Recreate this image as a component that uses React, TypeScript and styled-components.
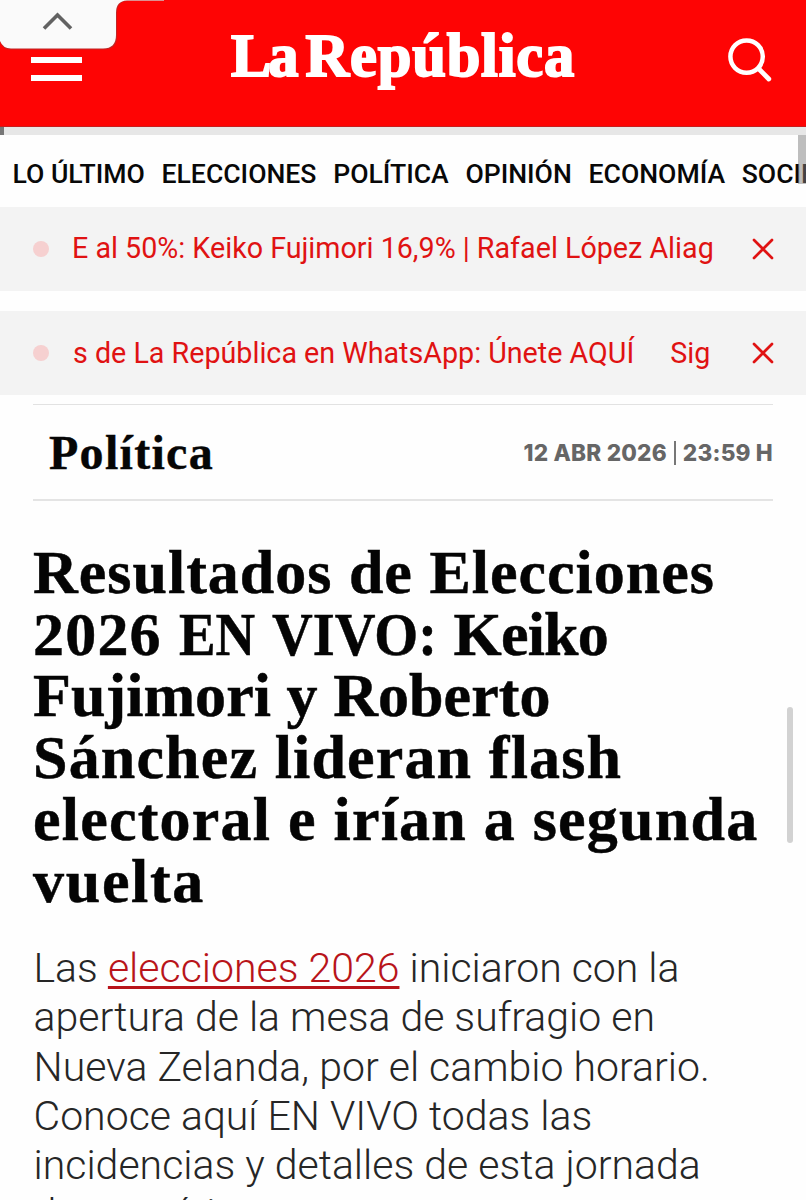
import React from "react";
import styled, { createGlobalStyle } from "styled-components";

const GlobalStyle = createGlobalStyle`
  * { box-sizing: border-box; }
  html, body { margin: 0; padding: 0; background: #fff; }
  body { overflow: hidden; }
`;

const sans = `Roboto, "Liberation Sans", sans-serif`;
const serif = `"Liberation Serif", serif`;

const Page = styled.div`
  position: relative;
  width: 806px;
  height: 1200px;
  overflow: hidden;
  background: #fefefe;
  font-family: ${sans};
`;

const Header = styled.header`
  display: flex;
  align-items: flex-start;
  justify-content: space-between;
  height: 127px;
  padding: 0 33px 0 31px;
  background: #fe0404;
  border-bottom: 1px solid #c81e1e;
`;

const MenuButton = styled.div`
  display: flex;
  flex-direction: column;
  gap: 12px;
  width: 51px;
  margin-top: 57px;
`;

const MenuBar = styled.span`
  height: 6px;
  background: #fff;
`;

const Logo = styled.div`
  display: flex;
  gap: 10px;
  margin: 22px 0 0 -3px;
  font: bold 60.5px/68px ${serif};
  color: #fff;
  white-space: nowrap;
  -webkit-text-stroke: 2px #fff;
`;

const LogoWord = styled.span<{ $spacing: number }>`
  letter-spacing: ${(p) => p.$spacing}px;
`;

const SearchIcon = styled.svg`
  width: 46px;
  height: 46px;
  margin-top: 37px;
`;

const PullTab = styled.div`
  position: absolute;
  top: 0;
  left: 0;
  width: 165px;
  height: 54px;
`;

const Progress = styled.div`
  height: 8px;
  background: #e7e7e7;
`;

const ProgressValue = styled.div`
  width: 4px;
  height: 8px;
  background: #777;
`;

const Nav = styled.nav`
  display: flex;
  align-items: center;
  height: 72px;
  padding: 5px 0 0 12.5px;
  gap: 16.7px;
  overflow: hidden;
`;

const NavItem = styled.span`
  flex: none;
  font-size: 26.6px;
  line-height: 30px;
  font-weight: 500;
  color: #080808;
`;

const Ticker = styled.div`
  display: flex;
  align-items: center;
  height: 84px;
  padding: 0 32px 0 33px;
  margin-bottom: 20px;
  background: #f3f3f3;
`;

const Dot = styled.span`
  flex: none;
  width: 16px;
  height: 16px;
  border-radius: 50%;
  background: #f6d0d0;
`;

const TickerText = styled.div<{ $shift?: number; $lift?: number }>`
  display: flex;
  gap: 36px;
  width: 643px;
  margin-left: 23px;
  padding-left: ${(p) => p.$shift ?? 0}px;
  padding-bottom: ${(p) => p.$lift ?? 0}px;
  overflow: hidden;
  white-space: nowrap;
  font-size: 28.68px;
  line-height: 40px;
  color: #e01212;
`;

const CloseIcon = styled.svg`
  flex: none;
  width: 22px;
  height: 22px;
  margin-left: auto;
`;

const SectionBar = styled.div`
  display: flex;
  align-items: center;
  justify-content: space-between;
  height: 97px;
  margin: -11px 33px 0;
  padding-left: 16px;
  border-top: 1.5px solid #e2e2e2;
  border-bottom: 2px solid #e4e4e4;
`;

const Section = styled.div`
  padding-top: 2px;
  font: bold 48px/56px ${serif};
  letter-spacing: 1.3px;
  color: #060606;
  -webkit-text-stroke: 0.4px #060606;
`;

const DateStamp = styled.div`
  display: flex;
  align-items: center;
  gap: 7px;
  padding-top: 1px;
  font: 800 22.6px/28px Inter, sans-serif;
  letter-spacing: 0.2px;
  color: #666;
`;

const DateDivider = styled.span`
  width: 2px;
  height: 24px;
  background: #777;
`;

const Headline = styled.h1`
  margin: 41px 0 0 33px;
  font: bold 62px/61.7px ${serif};
  color: #040404;
  -webkit-text-stroke: 0.5px #040404;
`;

const HeadlineRow = styled.span`
  display: block;
  white-space: nowrap;
`;

const Run = styled.span<{ $spacing: number }>`
  letter-spacing: ${(p) => p.$spacing}px;
`;

const Condensed = styled.span<{ $width: number; $scale: number }>`
  display: inline-block;
  width: ${(p) => p.$width}px;
  margin-right: 17px;
  transform: scaleX(${(p) => p.$scale});
  transform-origin: left;
`;

const Deck = styled.p`
  margin: 32px 0 0 33.5px;
  font-size: 41px;
  line-height: 49.2px;
  font-weight: 300;
  color: #262626;
`;

const DeckRow = styled.span`
  display: block;
  white-space: nowrap;
`;

const DeckLink = styled.a`
  color: #b8141a;
  text-decoration: underline;
  text-decoration-thickness: 3px;
  text-underline-offset: 4px;
  text-decoration-skip-ink: none;
`;

const ScrollThumb = styled.div`
  position: absolute;
  top: 707px;
  left: 787px;
  width: 6px;
  height: 136px;
  border-radius: 3px;
  background: #d2d2d2;
`;

const NavThumb = styled.div`
  position: absolute;
  top: 135px;
  left: 798px;
  width: 8px;
  height: 49px;
  background: rgba(125, 125, 125, 0.5);
`;

const navItems = ["LO ÚLTIMO", "ELECCIONES", "POLÍTICA", "OPINIÓN", "ECONOMÍA", "SOCIEDAD"];

const deck = [
  "apertura de la mesa de sufragio en",
  "Nueva Zelanda, por el cambio horario.",
  "Conoce aquí EN VIVO todas las",
  "incidencias y detalles de esta jornada",
  "democrática.",
];

const Close = () => (
  <CloseIcon viewBox="0 0 22 22" fill="none" stroke="#e01212" strokeWidth="2.7" strokeLinecap="round">
    <path d="M2 2l18 18M20 2L2 20" />
  </CloseIcon>
);

export default function App() {
  return (
    <Page>
      <GlobalStyle />
      <Header>
        <MenuButton>
          <MenuBar />
          <MenuBar />
        </MenuButton>
        <Logo>
          <LogoWord $spacing={-3}>La</LogoWord>
          <LogoWord $spacing={0.8}>República</LogoWord>
        </Logo>
        <SearchIcon viewBox="0 0 46 46" fill="none" stroke="#fff" strokeLinecap="round">
          <circle cx="19.6" cy="19.6" r="16.2" strokeWidth="4.5" />
          <path d="M31.500 31.500L41.800 42" strokeWidth="4.8" />
        </SearchIcon>
      </Header>
      <Progress>
        <ProgressValue />
      </Progress>
      <Nav>
        {navItems.map((label) => (
          <NavItem key={label}>{label}</NavItem>
        ))}
      </Nav>
      <Ticker>
        <Dot />
        <TickerText $lift={2}>E al 50%: Keiko Fujimori 16,9% | Rafael López Aliag</TickerText>
        <Close />
      </Ticker>
      <Ticker>
        <Dot />
        <TickerText $shift={1} $lift={1}>
          <span>s de La República en WhatsApp: Únete AQUÍ</span>
          <span>Sig</span>
        </TickerText>
        <Close />
      </Ticker>
      <SectionBar>
        <Section>Política</Section>
        <DateStamp>
          <span>12 ABR 2026</span>
          <DateDivider />
          <span>23:59 H</span>
        </DateStamp>
      </SectionBar>
      <Headline>
        <HeadlineRow>
          <Run $spacing={1}>Resultados de Elecciones</Run>
        </HeadlineRow>
        <HeadlineRow>
          <Run $spacing={1.2}>2026 </Run>
          <Condensed $width={76} $scale={0.885}>EN</Condensed>
          <Condensed $width={165} $scale={0.91}>VIVO:</Condensed>
          <Run $spacing={-0.8}>Keiko</Run>
        </HeadlineRow>
        <HeadlineRow>
          <Run $spacing={0.05}>Fujimori y Roberto</Run>
        </HeadlineRow>
        <HeadlineRow>
          <Run $spacing={1.15}>Sánchez lideran flash</Run>
        </HeadlineRow>
        <HeadlineRow>
          <Run $spacing={1.23}>electoral e irían a segunda</Run>
        </HeadlineRow>
        <HeadlineRow>
          <Run $spacing={1.7}>vuelta</Run>
        </HeadlineRow>
      </Headline>
      <Deck>
        <DeckRow>
          Las <DeckLink>elecciones 2026</DeckLink> iniciaron con la
        </DeckRow>
        {deck.map((text) => (
          <DeckRow key={text}>{text}</DeckRow>
        ))}
      </Deck>
      <PullTab>
        <svg width="165" height="54" viewBox="0 0 165 54">
          <path d="M0 0H164V1H128Q117 1 117 13V36Q117 49.5 104 49.5H10Q3 49.5 0 42Z" fill="#a33" fillOpacity="0.75" />
          <path d="M0 0H164V0.600H127Q116 1 116 13V35Q116 48.500 103 48.500H11Q3 48.500 0 41Z" fill="#fafafa" />
          <path d="M44 28.500L57.500 15L71 28.500" fill="none" stroke="#626262" strokeWidth="3.6" />
        </svg>
      </PullTab>
      <NavThumb />
      <ScrollThumb />
    </Page>
  );
}
